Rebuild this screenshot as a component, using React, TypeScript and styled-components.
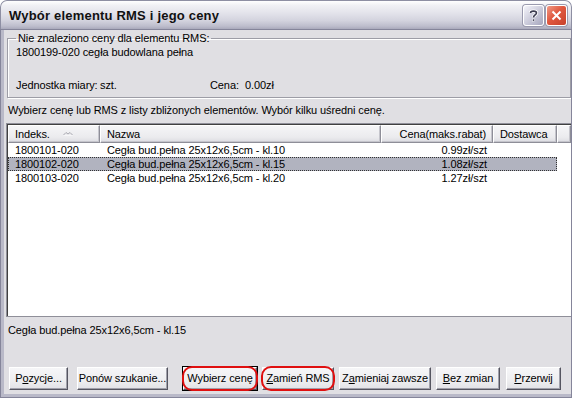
import React from "react";
import styled, { createGlobalStyle, css } from "styled-components";

const GlobalStyle = createGlobalStyle`
  html, body {
    margin: 0;
    padding: 0;
    background: #ffffff;
  }
  body {
    font-family: "Liberation Sans", Arial, sans-serif;
    font-size: 11px;
  }
`;

const Window = styled.div`
  width: 572px;
  height: 398px;
  display: flex;
  flex-direction: column;
  border-radius: 7px 7px 0 0;
  overflow: hidden;
  background: #c7c7d3;
  box-sizing: border-box;
`;

const TitleBar = styled.div`
  height: 29px;
  flex-shrink: 0;
  display: flex;
  align-items: center;
  padding: 0 4px 0 8px;
  box-sizing: border-box;
  border: 1px solid #8e8fa3;
  border-bottom: none;
  border-radius: 7px 7px 0 0;
  background: linear-gradient(
    to bottom,
    #ffffff 0%,
    #f1f1f5 15%,
    #e2e2ea 45%,
    #d3d3de 70%,
    #bdbdcc 90%,
    #a9a9bb 100%
  );
`;

const Title = styled.div`
  flex: 1;
  font-family: "Liberation Sans", Arial, sans-serif;
  font-weight: bold;
  font-size: 13px;
  letter-spacing: 0.2px;
  color: #111111;
  margin-top: 1px;
`;

const CaptionButton = styled.div<{ $close?: boolean }>`
  width: 21px;
  height: 21px;
  margin-left: 2px;
  box-sizing: border-box;
  border: 1px solid #ffffff;
  border-radius: 3px;
  display: flex;
  align-items: center;
  justify-content: center;
  box-shadow: 0 0 0 1px #9a9aae;
  background: ${(p) =>
    p.$close
      ? "linear-gradient(135deg, #f09a86 0%, #e0583f 45%, #c8412c 100%)"
      : "linear-gradient(135deg, #f4f4fa 0%, #c9c9d9 55%, #a6a6bd 100%)"};
`;

const Frame = styled.div`
  flex: 1;
  display: flex;
  border-left: 4px solid #b9b9c8;
  border-right: 4px solid #b9b9c8;
  border-bottom: 4px solid #b9b9c8;
  outline: 1px solid #85859a;
  outline-offset: -1px;
`;

const Client = styled.div`
  flex: 1;
  display: flex;
  flex-direction: column;
  background: #e0dfe3;
  padding: 0 2px 4px 2px;
  color: #000000;
  font-family: "Liberation Sans", Arial, sans-serif;
  font-size: 11px;
  letter-spacing: -0.1px;
  line-height: 13px;
`;

const Group = styled.fieldset`
  margin: 3px 1px 0 1px;
  padding: 1px 8px 5px 7px;
  border: 1px solid #9d9da6;
  box-shadow: inset 1px 1px 0 #ffffff, 1px 1px 0 #ffffff;
  min-width: 0;
`;

const Legend = styled.legend`
  padding: 0 2px;
  margin-left: 1px;
`;

const GroupLine = styled.div`
  padding-left: 1px;
`;

const UnitLine = styled.div`
  display: grid;
  grid-template-columns: 84px 110px 35px auto;
  margin-top: 20px;
  padding-left: 1px;
`;

const Hint = styled.div`
  margin: 6px 0 0 2px;
`;

const ListView = styled.div`
  margin-top: 6px;
  height: 194px;
  box-sizing: border-box;
  background: #ffffff;
  border: 1px solid #8f8f99;
  box-shadow: inset 1px 1px 0 #404040;
  padding: 1px 0 0 1px;
  display: flex;
  flex-direction: column;
`;

const cols = "92px 281px 112px 64px";

const HeaderRow = styled.div`
  display: grid;
  grid-template-columns: ${cols} 1fr;
  height: 18px;
  flex-shrink: 0;
`;

const HeaderCell = styled.div<{ $right?: boolean }>`
  display: flex;
  align-items: center;
  justify-content: ${(p) => (p.$right ? "flex-end" : "flex-start")};
  padding: 0 6px;
  background: linear-gradient(to bottom, #f5f5f7 0%, #ebebee 70%, #dcdce2 100%);
  border-top: 1px solid #ffffff;
  border-left: 1px solid #ffffff;
  border-right: 1px solid #8e8e98;
  border-bottom: 1px solid #8e8e98;
  box-shadow: inset -1px -1px 0 #c5c5cc;
  box-sizing: border-box;
  position: relative;
`;

const SortMark = styled.svg`
  position: absolute;
  left: 54px;
  top: 5px;
`;

const Row = styled.div<{ $selected?: boolean }>`
  display: grid;
  grid-template-columns: ${cols};
  width: 549px;
  height: 14px;
  box-sizing: border-box;
  align-items: center;
  ${(p) =>
    p.$selected &&
    css`
      background: #b1b3bf;
      outline: 1px dotted #333333;
      outline-offset: -1px;
    `}
`;

const Cell = styled.div<{ $right?: boolean }>`
  padding: 0 6px 0 7px;
  text-align: ${(p) => (p.$right ? "right" : "left")};
  white-space: nowrap;
  overflow: hidden;
`;

const Status = styled.div`
  margin: 7px 0 0 2px;
`;

const ButtonRow = styled.div`
  margin-top: auto;
  display: flex;
  padding-left: 3px;
`;

const Button = styled.div<{ $width: number; $gap: number; $default?: boolean; $marked?: boolean }>`
  position: relative;
  width: ${(p) => p.$width}px;
  height: 23px;
  margin-left: ${(p) => p.$gap}px;
  box-sizing: border-box;
  display: flex;
  align-items: center;
  justify-content: center;
  white-space: nowrap;
  background: linear-gradient(to bottom, #f6f6f8 0%, #eeeef0 60%, #e2e2e6 100%);
  border: 1px solid;
  border-color: #ffffff #555560 #555560 #ffffff;
  box-shadow: inset -1px -1px 0 #a0a0aa;
  ${(p) =>
    p.$default &&
    css`
      outline: 1px solid #000000;
    `}
  ${(p) =>
    p.$marked &&
    css`
      &::after {
        content: "";
        position: absolute;
        inset: -2px;
        border: 2px solid #e01010;
        border-radius: 10px;
      }
    `}
`;

const Key = styled.span`
  text-decoration: underline;
`;

const rows = [
  { idx: "1800101-020", name: "Cegła bud.pełna 25x12x6,5cm - kl.10", price: "0.99zł/szt" },
  { idx: "1800102-020", name: "Cegła bud.pełna 25x12x6,5cm - kl.15", price: "1.08zł/szt", selected: true },
  { idx: "1800103-020", name: "Cegła bud.pełna 25x12x6,5cm - kl.20", price: "1.27zł/szt" },
];

export default function App() {
  return (
    <>
      <GlobalStyle />
      <Window>
        <TitleBar>
          <Title>Wybór elementu RMS i jego ceny</Title>
          <CaptionButton>
            <svg width="11" height="13" viewBox="0 0 11 13">
              <path
                d="M2.5 4 C2.5 1.5 8.5 1.5 8.5 4 C8.5 6 5.5 6 5.5 8.5"
                fill="none"
                stroke="#ffffff"
                strokeWidth="3.2"
              />
              <path
                d="M2.5 4 C2.5 1.5 8.5 1.5 8.5 4 C8.5 6 5.5 6 5.5 8.5"
                fill="none"
                stroke="#3c3c50"
                strokeWidth="1.6"
              />
              <rect x="4.4" y="10" width="2.2" height="2.2" fill="#3c3c50" stroke="#ffffff" strokeWidth="0.6" />
            </svg>
          </CaptionButton>
          <CaptionButton $close>
            <svg width="11" height="11" viewBox="0 0 11 11">
              <path d="M1.5 1.5 L9.5 9.5 M9.5 1.5 L1.5 9.5" stroke="#ffffff" strokeWidth="2" />
            </svg>
          </CaptionButton>
        </TitleBar>
        <Frame>
          <Client>
            <Group>
              <Legend>Nie znaleziono ceny dla elementu RMS:</Legend>
              <GroupLine>1800199-020 cegła budowlana pełna</GroupLine>
              <UnitLine>
                <span>Jednostka miary:</span>
                <span>szt.</span>
                <span>Cena:</span>
                <span>0.00zł</span>
              </UnitLine>
            </Group>
            <Hint>Wybierz cenę lub RMS z listy zbliżonych elementów. Wybór kilku uśredni cenę.</Hint>
            <ListView>
              <HeaderRow>
                <HeaderCell>
                  Indeks.
                  <SortMark width="10" height="5" viewBox="0 0 10 5">
                    <path d="M0.5 4 L3 1.5 L5 3 L7 1.5 L9.5 4" fill="none" stroke="#a8a8b0" strokeWidth="1" />
                    <path d="M0.5 5 L9.5 5" stroke="#ffffff" strokeWidth="1" />
                  </SortMark>
                </HeaderCell>
                <HeaderCell>Nazwa</HeaderCell>
                <HeaderCell $right>Cena(maks.rabat)</HeaderCell>
                <HeaderCell>Dostawca</HeaderCell>
                <HeaderCell />
              </HeaderRow>
              {rows.map((r) => (
                <Row key={r.idx} $selected={r.selected}>
                  <Cell>{r.idx}</Cell>
                  <Cell>{r.name}</Cell>
                  <Cell $right>{r.price}</Cell>
                  <Cell />
                </Row>
              ))}
            </ListView>
            <Status>Cegła bud.pełna 25x12x6,5cm - kl.15</Status>
            <ButtonRow>
              <Button $width={59} $gap={0}>
                P<Key>o</Key>zycje...
              </Button>
              <Button $width={91} $gap={9}>
                Ponów szukanie...
              </Button>
              <Button $width={74} $gap={15} $default $marked>
                Wybierz cenę
              </Button>
              <Button $width={72} $gap={5} $marked>
                <Key>Z</Key>amień RMS
              </Button>
              <Button $width={92} $gap={5}>
                Z<Key>a</Key>mieniaj zawsze
              </Button>
              <Button $width={64} $gap={5}>
                <Key>B</Key>ez zmian
              </Button>
              <Button $width={55} $gap={6}>
                <Key>P</Key>rzerwij
              </Button>
            </ButtonRow>
          </Client>
        </Frame>
      </Window>
    </>
  );
}
